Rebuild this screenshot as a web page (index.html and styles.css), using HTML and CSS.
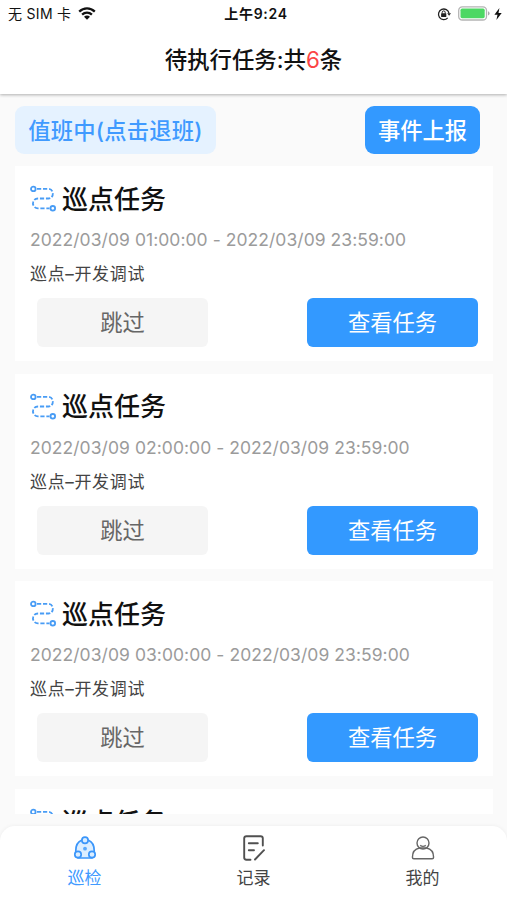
FILE: index.html
```html
<!DOCTYPE html>
<html lang="zh-CN">
<head>
    <meta charset="UTF-8">
    <meta name="viewport" content="width=device-width, initial-scale=1.0">
    <title>待执行任务</title>
    <link rel="stylesheet" href="styles.css">
</head>
<body>
    <svg class="symbols" width="0" height="0">
        <symbol id="route" viewBox="0 0 27 28">
            <g fill="none" stroke="#489cf5" stroke-width="1.8">
                <circle cx="3.3" cy="3.9" r="2.3"/>
                <circle cx="22.8" cy="23.3" r="2.3"/>
                <path d="M7 3.9H18.5C24.3 3.9 24.3 13.5 18.5 13.5H8C1.3 13.5 1.3 23.3 8 23.3H19.5" stroke-dasharray="4.2 1.8"/>
            </g>
        </symbol>
    </svg>

    <header class="header">
        <div class="status-bar">
            <div class="carrier">
                <span>无 SIM 卡</span>
                <svg width="18" height="13" viewBox="0 0 18 13">
                    <g fill="none" stroke="#111" stroke-width="2.3">
                        <path d="M1.2 4.6C5.6 .3 12.4 .3 16.8 4.6"/>
                        <path d="M4.1 7.7C6.9 5 11.1 5 13.9 7.7"/>
                    </g>
                    <path d="M6 9.8C7.7 8.1 10.3 8.1 12 9.8L9 12.8Z" fill="#111"/>
                </svg>
            </div>
            <div class="clock">上午9:24</div>
            <div class="power">
                <svg width="14" height="14" viewBox="0 0 14 14">
                    <path d="M10.7 10.9A5.3 5.3 0 1 1 12 6.4" fill="none" stroke="#222" stroke-width="1.3"/>
                    <path d="M10.2 6.3H14L12.1 8.8Z" fill="#222"/>
                    <rect x="4.1" y="6.2" width="5.2" height="3.9" rx=".5" fill="#222"/>
                    <path d="M5.2 6.5V5.4A1.5 1.5 0 0 1 8.2 5.4V6.5" fill="none" stroke="#222" stroke-width="1"/>
                </svg>
                <svg width="32" height="15" viewBox="0 0 32 15">
                    <rect x=".7" y=".8" width="27.8" height="13.2" rx="3.6" fill="#fff" stroke="#b4b4b4" stroke-width="1.3"/>
                    <rect x="2.5" y="2.6" width="24.2" height="9.6" rx="1.6" fill="#4cd863"/>
                    <path d="M30 5.2Q31.6 5.8 31.6 7.4T30 9.6Z" fill="#aaa"/>
                </svg>
                <svg class="bolt" width="8" height="12" viewBox="0 0 8 12">
                    <path d="M5.4 0L.4 6.7H3.5L2.4 12L7.7 4.9H4.5Z" fill="#111"/>
                </svg>
            </div>
        </div>
        <h1 class="page-title">待执行任务:共<span class="count">6</span>条</h1>
    </header>

    <main class="content">
        <div class="toolbar">
            <button class="duty-btn">值班中(点击退班)</button>
            <button class="report-btn">事件上报</button>
        </div>

        <div class="task-list">
            <div class="task">
                <div class="task-title"><svg class="route-icon"><use href="#route"/></svg><span>巡点任务</span></div>
                <div class="task-time">2022/03/09 01:00:00 - 2022/03/09 23:59:00</div>
                <div class="task-desc">巡点–开发调试</div>
                <div class="task-actions">
                    <button class="skip-btn">跳过</button>
                    <button class="view-btn">查看任务</button>
                </div>
            </div>
            <div class="task">
                <div class="task-title"><svg class="route-icon"><use href="#route"/></svg><span>巡点任务</span></div>
                <div class="task-time">2022/03/09 02:00:00 - 2022/03/09 23:59:00</div>
                <div class="task-desc">巡点–开发调试</div>
                <div class="task-actions">
                    <button class="skip-btn">跳过</button>
                    <button class="view-btn">查看任务</button>
                </div>
            </div>
            <div class="task">
                <div class="task-title"><svg class="route-icon"><use href="#route"/></svg><span>巡点任务</span></div>
                <div class="task-time">2022/03/09 03:00:00 - 2022/03/09 23:59:00</div>
                <div class="task-desc">巡点–开发调试</div>
                <div class="task-actions">
                    <button class="skip-btn">跳过</button>
                    <button class="view-btn">查看任务</button>
                </div>
            </div>
            <div class="task">
                <div class="task-title"><svg class="route-icon"><use href="#route"/></svg><span>巡点任务</span></div>
            </div>
        </div>
    </main>

    <nav class="tabs">
        <a class="tab active">
            <svg width="24" height="24" viewBox="0 0 24 24">
                <g fill="#dceeff" stroke="#3b96fa" stroke-width="1.7">
                    <path d="M8.5 4.3C4.5 6 2.8 9.5 2.8 14.5V20L5 22H19L21.2 20V14.5C21.2 9.5 19.5 6 15.5 4.3Z"/>
                    <circle cx="12" cy="4.3" r="3.1"/>
                    <circle cx="5" cy="18.5" r="3.2"/>
                    <circle cx="19" cy="18.5" r="3.2"/>
                </g>
                <circle cx="12" cy="12.7" r="1.9" fill="#5aa9fb"/>
            </svg>
            <span>巡检</span>
        </a>
        <a class="tab">
            <svg width="24" height="26" viewBox="0 0 24 26">
                <g fill="none" stroke="#505050" stroke-width="1.9" stroke-linecap="round">
                    <path d="M8.5 24.7H4.4Q2.2 24.7 2.2 22.5V3.3Q2.2 1.2 4.4 1.2H18.6Q20.8 1.2 20.8 3.3V10.5"/>
                    <path d="M6.8 8.2H15.8M6.8 15.2H12M13 24.5L22 15.2"/>
                </g>
            </svg>
            <span>记录</span>
        </a>
        <a class="tab">
            <svg width="24" height="24" viewBox="0 0 24 24">
                <g fill="none" stroke="#666" stroke-width="1.4">
                    <circle cx="12" cy="7" r="6"/>
                    <path d="M8.5 12C4 12.9 1.4 16.7 1.4 21.3Q1.4 22.8 2.9 22.8H21.1Q22.6 22.8 22.6 21.3C22.6 16.7 20 12.9 15.5 12Z"/>
                    <path d="M9.2 9.4Q12 11.4 14.8 9.4"/>
                </g>
            </svg>
            <span>我的</span>
        </a>
    </nav>
</body>
</html>
```

FILE: styles.css
```css
* {
    margin: 0;
    padding: 0;
    box-sizing: border-box;
    font-family: Inter, 'Noto Sans CJK SC', sans-serif;
}

body {
    height: 100vh;
    display: flex;
    flex-direction: column;
    background: #fafafa;
    color: #111;
    overflow: hidden;
}

button {
    border: none;
    cursor: pointer;
}

svg {
    display: block;
    flex: none;
}

.symbols {
    position: absolute;
}

.header {
    height: 94px;
    flex: none;
    background: #fff;
    box-shadow: 0 1px 3px rgba(0, 0, 0, 0.3);
}

.status-bar {
    height: 27px;
    padding: 0 5px 0 8px;
    display: grid;
    grid-template-columns: 1fr auto 1fr;
    align-items: center;
    font-size: 14px;
}

.carrier, .power {
    display: flex;
    align-items: center;
    gap: 7px;
}

.carrier span {
    padding-bottom: 2px;
    letter-spacing: 0.3px;
}

.power {
    justify-content: flex-end;
}

.bolt {
    margin-left: -3px;
}

.clock {
    padding: 0 0 1px 2px;
    font-weight: 600;
    letter-spacing: 0.7px;
}

.page-title {
    height: 66px;
    line-height: 66px;
    text-align: center;
    font-size: 22.4px;
    font-weight: 500;
}

.count {
    color: #fb4444;
    font-weight: 400;
}

.content {
    height: 720px;
    flex: none;
    padding: 12px 14px 0 15px;
    overflow: hidden;
}

.toolbar {
    display: flex;
    justify-content: space-between;
    padding-right: 13px;
    margin-bottom: 12px;
}

.duty-btn, .report-btn {
    height: 48px;
    padding-bottom: 2px;
    border-radius: 9px;
    font-size: 22.3px;
}

.duty-btn {
    width: 201px;
    background: #e5f2ff;
    color: #409aff;
    letter-spacing: 0.2px;
    font-weight: 500;
}

.report-btn {
    width: 115px;
    background: #3399ff;
    color: #fff;
    font-weight: 500;
}

.task-list {
    display: flex;
    flex-direction: column;
    gap: 12.7px;
}

.task {
    height: 195px;
    padding: 14px 15px 0;
    background: #fff;
}

.task-title {
    display: flex;
    align-items: center;
    gap: 5px;
    height: 38px;
    font-size: 26px;
    font-weight: 500;
}

.task-title span {
    padding-bottom: 4px;
}

.route-icon {
    width: 27px;
    height: 28px;
}

.task-time {
    height: 42px;
    line-height: 43px;
    font-size: 17.5px;
    letter-spacing: 0.05px;
    color: #9b9b9b;
    white-space: nowrap;
}

.task-desc {
    height: 27px;
    line-height: 28px;
    font-size: 17px;
    letter-spacing: 0.65px;
    color: #444;
}

.task-actions {
    display: flex;
    justify-content: space-between;
    padding: 11px 0 0 7px;
}

.skip-btn, .view-btn {
    width: 171px;
    height: 49px;
    padding-bottom: 3px;
    border-radius: 6px;
    font-size: 22.3px;
}

.skip-btn {
    background: #f5f5f5;
    color: #666;
}

.view-btn {
    background: #3399ff;
    color: #fff;
}

.tabs {
    flex: 1;
    margin-top: 12px;
    display: flex;
    background: #fff;
    border-radius: 15px 15px 0 0;
    box-shadow: 0 0 4px rgba(0, 0, 0, 0.06);
}

.tab {
    flex: 1;
    display: flex;
    flex-direction: column;
    align-items: center;
    padding-top: 9px;
    font-size: 17px;
    line-height: 26px;
    color: #444;
}

.tab svg {
    height: 26px;
    margin-bottom: 4px;
}

.active {
    color: #409aff;
}
```
